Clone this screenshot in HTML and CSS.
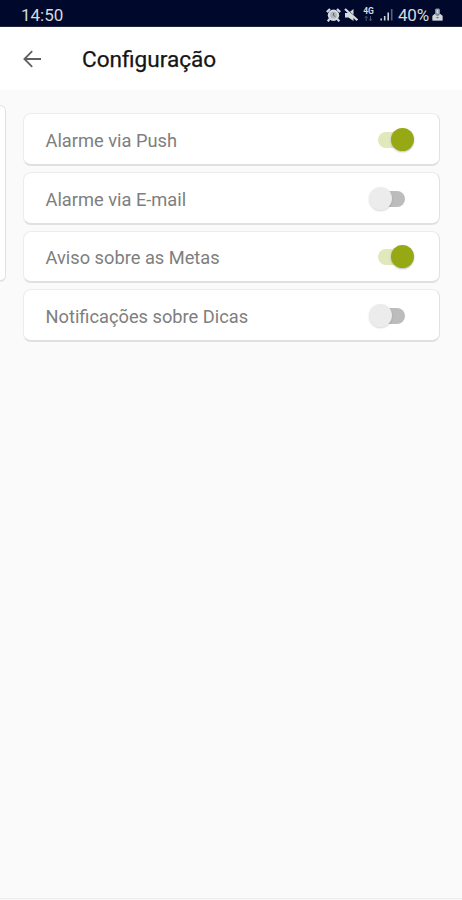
FILE: index.html
```html
<!DOCTYPE html>
<html lang="pt-BR">
<head>
<meta charset="utf-8">
<title>Configuração</title>
<link rel="stylesheet" href="styles.css">
</head>
<body>
<div class="status">
  <span class="time">14:50</span>
  <div class="status-icons">
    <svg class="alarm" width="15" height="14" viewBox="0 0 15 14"><circle cx="7.5" cy="7.2" r="5.7" fill="#d5dade"/><path d="M.8 4 4 1M14.2 4 11 1M3.5 11 1.8 13.3M11.5 11 13.2 13.3" stroke="#d5dade" stroke-width="2.2"/><circle cx="7.5" cy="7.2" r="3.4" fill="#aeb6bf"/><path d="M7.5 4.8v2.6l1.8 1" fill="none" stroke="#5b6379" stroke-width="1"/></svg>
    <svg class="mute" width="14" height="14" viewBox="0 0 14 14"><path d="M1 5h3.5L9.5 1v12L4.5 9.5H1z" fill="#d5dade"/><path d="M2.5 1 13.5 10.8" stroke="#00082b" stroke-width="1"/><path d="M1 1 13.3 12.2" stroke="#d5dade" stroke-width="2.2"/></svg>
    <div class="network"><span>4G</span><svg width="9" height="5" viewBox="0 0 9 5"><path d="M2.2 0v5M.5 1.8 2.2 .3 3.8 1.8M6.5 5V0M4.8 3.2 6.5 4.7 8.2 3.2" fill="none" stroke="#4a536c"/></svg></div>
    <svg class="signal" width="14" height="13" viewBox="0 0 14 13"><path d="M1.2 10.5v2M4.7 8v4.5M8.2 4.5v8" stroke="#ccd2d8" stroke-width="1.6"/><path d="M11.7 1v11.5" stroke="#59617b" stroke-width="1.6"/></svg>
    <span class="percent">40%</span>
    <svg class="battery" width="11" height="13" viewBox="0 0 11 13"><path d="M3 1.5 4 .5h3l1 1v4.3l2.5 2v4.7H.5V7.8L3 5.8z" fill="#7f899b"/><path d="M5.5 1.5v4" stroke="#d1d6dc" stroke-width="2"/><path d="M2.7 6 .5 8v4.5h10V8L8.3 6 5.5 8.5z" fill="#d1d6dc"/><path d="M3.5 9h4L5.5 10.7z" fill="#7f899b"/></svg>
  </div>
</div>
<header class="header">
  <svg class="back" width="20" height="20" viewBox="0 0 20 20"><path d="M19 10H2M10.2 2.2 2.4 10l7.8 7.8" fill="none" stroke="#606060" stroke-width="1.8"/></svg>
  <h1>Configuração</h1>
</header>
<main class="content">
  <div class="side-card"></div>
  <div class="settings">
    <div class="card"><span>Alarme via Push</span><div class="switch on"><i class="thumb"></i></div></div>
    <div class="card"><span>Alarme via E-mail</span><div class="switch"><i class="thumb"></i></div></div>
    <div class="card"><span>Aviso sobre as Metas</span><div class="switch on"><i class="thumb"></i></div></div>
    <div class="card"><span>Notificações sobre Dicas</span><div class="switch"><i class="thumb"></i></div></div>
  </div>
</main>
<div class="bottom-edge"></div>
</body>
</html>
```
FILE: styles.css
```css
* { box-sizing: border-box; }
body {
  margin: 0;
  height: 900px;
  display: flex;
  flex-direction: column;
  overflow: hidden;
  background: #fafafa;
  font-family: Roboto, sans-serif;
}
.status {
  flex: none;
  height: 27px;
  padding: 1px 19px 0 21px;
  display: flex;
  align-items: center;
  justify-content: space-between;
  background: #00082b;
  color: #d5dade;
  border-bottom: 1px solid #20243a;
}
.time { font-size: 17px; line-height: 20px; padding-top: 2px; }
.status-icons { display: flex; align-items: center; padding-top: 2px; }
.mute { margin-left: 3px; }
.network {
  width: 13px;
  height: 13px;
  margin-left: 4px;
  display: flex;
  flex-direction: column;
  align-items: center;
}
.network span { font-size: 8.5px; line-height: 7px; font-weight: 700; }
.network svg { margin-top: 1px; }
.signal { margin-left: 5px; }
.percent { width: 32px; margin-left: 4px; font-size: 17px; line-height: 20px; letter-spacing: -0.2px; }
.battery { margin-left: 2px; }
.header {
  flex: none;
  height: 63px;
  padding: 3px 0 0 22px;
  display: flex;
  align-items: center;
  background: #fff;
}
.back { margin: 0 40px 3px 0; }
h1 {
  margin: 0;
  font-size: 22.6px;
  line-height: 28px;
  font-weight: 400;
  color: #151515;
  -webkit-text-stroke: 0.25px #151515;
}
.content { flex: 1; display: flex; align-items: flex-start; }
.side-card {
  width: 6px;
  height: 177px;
  margin-top: 15px;
  background: #fff;
  border: 1px solid #e2e2e2;
  border-left: 0;
  border-bottom-width: 2px;
  border-radius: 0 6px 6px 0;
}
.settings {
  width: 417px;
  margin: 23px 0 0 17px;
  display: flex;
  flex-direction: column;
  gap: 6px;
}
.card {
  height: 52.8px;
  padding: 1px 25px 0 21.5px;
  display: flex;
  align-items: center;
  justify-content: space-between;
  background: #fff;
  border: 1px solid #ececec;
  border-bottom: 2px solid #e0e0e0;
  border-right-color: #e2e2e2;
  border-radius: 8px;
  color: #7e7e7e;
  font-size: 18.25px;
  line-height: 24px;
}
.card span { padding-top: 3px; }
.switch {
  width: 45px;
  height: 23px;
  display: flex;
  align-items: center;
  position: relative;
}
.switch::before {
  content: "";
  position: absolute;
  left: 9px;
  top: 4px;
  width: 27px;
  height: 16px;
  border-radius: 8px;
  background: #bcbcbc;
}
.thumb {
  position: relative;
  width: 23px;
  height: 23px;
  border-radius: 50%;
  background: #ececec;
  box-shadow: 0 1px 2px rgba(0, 0, 0, 0.16);
}
.on { justify-content: flex-end; }
.on::before { background: #e0e8bc; }
.on .thumb { background: #96a814; box-shadow: 0 1px 2px rgba(0, 0, 0, 0.25); }
.bottom-edge { flex: none; height: 2px; background: #eee; border-bottom: 1px solid #f7f7f7; }
```
